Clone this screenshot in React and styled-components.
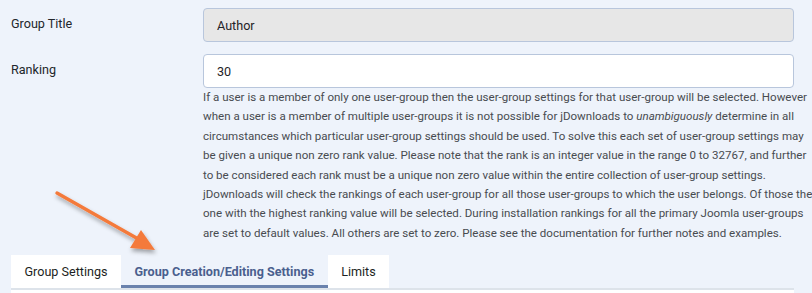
import React from "react";
import styled, { createGlobalStyle } from "styled-components";

const Global = createGlobalStyle`
  *, *::before, *::after { box-sizing: border-box; }
  html, body { margin: 0; padding: 0; background: #eef3fb; overflow: hidden; }
  body { font-family: Roboto, "Noto Sans", "Liberation Sans", sans-serif; }
`;

const Page = styled.div`
  position: relative;
  width: 812px;
  height: 293px;
  overflow: hidden;
  background: #eef3fb;
  padding: 8px 0 0 11px;
`;

const Content = styled.div`
  width: 783px;
`;

const FieldRow = styled.div`
  display: grid;
  grid-template-columns: 192px 591px;
  margin-bottom: ${(p) => p.$gap || 0}px;
`;

const Label = styled.label`
  font-size: 12.6px;
  color: #22262b;
  line-height: 20px;
  padding-top: 6px;
`;

const Control = styled.div`
  display: flex;
  flex-direction: column;
  min-width: 0;
`;

const Input = styled.div`
  height: 34px;
  border: 1px solid #b8c6dc;
  border-radius: 4px;
  background: ${(p) => (p.$disabled ? "#e7e7e7" : "#ffffff")};
  padding: 0 13px;
  display: flex;
  align-items: center;
  font-size: 12.6px;
  color: #1f2327;
`;

const Help = styled.div`
  font-size: 11.55px;
  line-height: 19.4px;
  color: #484b50;
`;

const HelpLine = styled.div`
  white-space: nowrap;
`;

const Tabs = styled.div`
  display: flex;
  margin-top: 12px;
  height: 33px;
`;

const Tab = styled.div`
  height: 33px;
  padding: 3px 13.5px 0;
  display: flex;
  align-items: center;
  font-size: 12.6px;
  font-weight: ${(p) => (p.$active ? 700 : 400)};
  color: ${(p) => (p.$active ? "#4a5f8e" : "#1c1f23")};
  background: ${(p) => (p.$active ? "transparent" : "#ffffff")};
  border-bottom: 3px solid ${(p) => (p.$active ? "#6a82ad" : "transparent")};
`;

const Panel = styled.div`
  border-top: 2px solid #dde3ea;
  background: #ffffff;
  height: 10px;
`;

const Arrow = styled.svg`
  position: absolute;
  left: 40px;
  top: 180px;
  overflow: visible;
`;

const helpLines = [
  "If a user is a member of only one user-group then the user-group settings for that user-group will be selected. However",
  <>
    when a user is a member of multiple user-groups it is not possible for jDownloads to <em>unambiguously</em> determine in all
  </>,
  "circumstances which particular user-group settings should be used. To solve this each set of user-group settings may",
  "be given a unique non zero rank value. Please note that the rank is an integer value in the range 0 to 32767, and further",
  "to be considered each rank must be a unique non zero value within the entire collection of user-group settings.",
  "jDownloads will check the rankings of each user-group for all those user-groups to which the user belongs. Of those the",
  "one with the highest ranking value will be selected. During installation rankings for all the primary Joomla user-groups",
  "are set to default values. All others are set to zero. Please see the documentation for further notes and examples.",
];

export default function App() {
  return (
    <>
      <Global />
      <Page>
        <Content>
          <FieldRow $gap={12}>
            <Label>Group Title</Label>
            <Control>
              <Input $disabled>Author</Input>
            </Control>
          </FieldRow>
          <FieldRow>
            <Label>Ranking</Label>
            <Control>
              <Input>30</Input>
              <Help>
                {helpLines.map((l, i) => (
                  <HelpLine key={i}>{l}</HelpLine>
                ))}
              </Help>
            </Control>
          </FieldRow>
          <Tabs>
            <Tab>Group Settings</Tab>
            <Tab $active>Group Creation/Editing Settings</Tab>
            <Tab>Limits</Tab>
          </Tabs>
          <Panel />
        </Content>
        <Arrow width="130" height="80" viewBox="0 0 130 80">
          <defs>
            <filter id="sh" x="-20%" y="-20%" width="150%" height="160%">
              <feDropShadow dx="1" dy="3" stdDeviation="2" floodColor="#000" floodOpacity="0.35" />
            </filter>
          </defs>
          <g filter="url(#sh)">
            <line x1="17" y1="13" x2="100" y2="60" stroke="#f47a3a" strokeWidth="3.4" strokeLinecap="round" />
            <polygon points="115,70 90,68 101,50" fill="#f47a3a" />
          </g>
        </Arrow>
      </Page>
    </>
  );
}
